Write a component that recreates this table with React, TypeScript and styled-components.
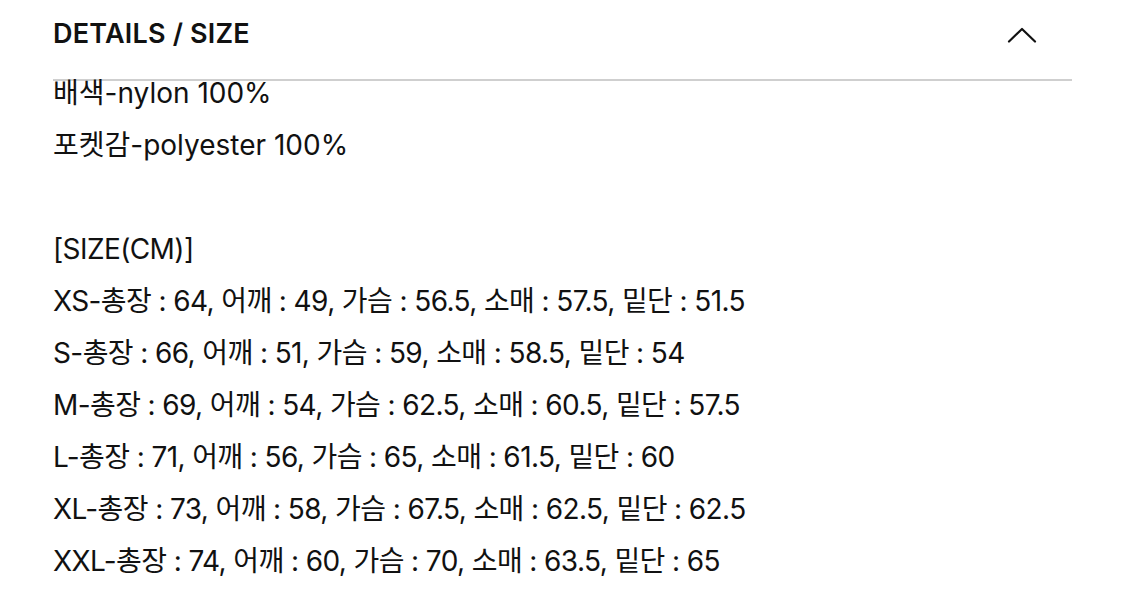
import React from 'react';
import styled, { createGlobalStyle } from 'styled-components';

const GlobalStyle = createGlobalStyle`
  html, body {
    margin: 0;
    padding: 0;
    background: #ffffff;
  }
  body {
    font-family: Inter, "Noto Sans CJK KR", sans-serif;
    color: #111111;
  }
`;

const sizes = [
  'XS-총장 : 64, 어깨 : 49, 가슴 : 56.5, 소매 : 57.5, 밑단 : 51.5',
  'S-총장 : 66, 어깨 : 51, 가슴 : 59, 소매 : 58.5, 밑단 : 54',
  'M-총장 : 69, 어깨 : 54, 가슴 : 62.5, 소매 : 60.5, 밑단 : 57.5',
  'L-총장 : 71, 어깨 : 56, 가슴 : 65, 소매 : 61.5, 밑단 : 60',
  'XL-총장 : 73, 어깨 : 58, 가슴 : 67.5, 소매 : 62.5, 밑단 : 62.5',
  'XXL-총장 : 74, 어깨 : 60, 가슴 : 70, 소매 : 63.5, 밑단 : 65',
];

const App: React.FC = () => {
  return (
    <>
      <GlobalStyle />
      <Panel>
        <Header>
          <Title>DETAILS / SIZE</Title>
          <Toggle aria-label="collapse">
            <svg width="30" height="18" viewBox="0 0 30 18" fill="none">
              <path d="M2 15.5 L15 3 L28 15.5" stroke="#111" strokeWidth="2.2" strokeLinecap="round" strokeLinejoin="round" />
            </svg>
          </Toggle>
        </Header>
        <Body>
          <Line>배색-nylon 100%</Line>
          <Line>포켓감-polyester 100%</Line>
          <Line />
          <Line tight>[SIZE(CM)]</Line>
          {sizes.map((s) => (
            <Line key={s} tight>
              {s}
            </Line>
          ))}
        </Body>
      </Panel>
    </>
  );
};

const Panel = styled.div`
  width: 1125px;
  height: 598px;
  overflow: hidden;
  padding: 0 53px;
  box-sizing: border-box;
`;

const Header = styled.div`
  display: flex;
  align-items: center;
  justify-content: space-between;
  height: 81px;
  padding-bottom: 12px;
  box-sizing: border-box;
  border-bottom: 2px solid #cfcfcf;
  width: 1019px;
`;

const Title = styled.h3`
  margin: 0;
  font-size: 27px;
  font-weight: 600;
  letter-spacing: 0.2px;
  color: #111;
`;

const Toggle = styled.button`
  background: transparent;
  border: none;
  padding: 0;
  margin-right: 35px;
  margin-top: 2px;
  cursor: pointer;
  display: flex;
`;

const Body = styled.div`
  display: flex;
  flex-direction: column;
  margin-top: -14px;
`;

const Line = styled.div<{ tight?: boolean }>`
  height: 52px;
  line-height: 52px;
  font-size: 28px;
  letter-spacing: ${(p) => (p.tight ? '-0.6px' : '0px')};
  color: #111;
  white-space: nowrap;
`;

export default App;
